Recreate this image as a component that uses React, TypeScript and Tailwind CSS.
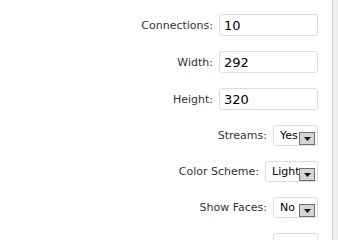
import React from "react";

const labelFont = { fontFamily: '"DejaVu Sans", Verdana, sans-serif' };

function Arrow() {
  return (
    <div className="flex h-[13px] w-[16px] items-center justify-center border border-[#6f6f6f] bg-[#d4d4d4]">
      <svg width="7" height="4" viewBox="0 0 7 4">
        <path d="M0 0H7L3.5 4Z" fill="#111" />
      </svg>
    </div>
  );
}

function InputRow({ label, value }: { label: string; value: string }) {
  return (
    <div className="flex items-center justify-end gap-[6px]">
      <span className="text-[11px] leading-none text-[#333]">{label}</span>
      <div className="flex h-[22px] w-[99px] items-center rounded-[3px] border border-[#dcdcdc] bg-white pl-[4px]">
        <span className="text-[13px] leading-none text-black">{value}</span>
      </div>
    </div>
  );
}

function SelectRow({ label, value, width }: { label: string; value: string; width: string }) {
  return (
    <div className="flex items-center justify-end gap-[6px]">
      <span className="text-[11px] leading-none text-[#333]">{label}</span>
      <div className={`relative flex h-[21px] items-center overflow-hidden rounded-[3px] border border-[#dcdcdc] bg-white pl-[6px] ${width}`}>
        <span className="text-[11px] leading-none text-black">{value}</span>
        <div className="absolute right-[2px] top-[6px]">
          <Arrow />
        </div>
      </div>
    </div>
  );
}

export default function App() {
  return (
    <div className="flex h-[240px] w-[338px] overflow-hidden bg-white" style={labelFont}>
      <div className="flex w-[332px] flex-col">
        <div className="ml-[171px] h-px w-[146px] bg-[#dcdcdc]" />
        <div className="mt-[14px] flex flex-col gap-[15px] pr-[14px]">
          <InputRow label="Connections:" value="10" />
          <InputRow label="Width:" value="292" />
          <InputRow label="Height:" value="320" />
          <SelectRow label="Streams:" value="Yes" width="w-[45px]" />
          <SelectRow label="Color Scheme:" value="Light" width="w-[53px]" />
          <SelectRow label="Show Faces:" value="No" width="w-[45px]" />
          <SelectRow label="" value="" width="w-[45px]" />
        </div>
      </div>
      <div className="w-[6px] border-l border-[#d9d9d9] bg-[#efefef]" />
    </div>
  );
}
